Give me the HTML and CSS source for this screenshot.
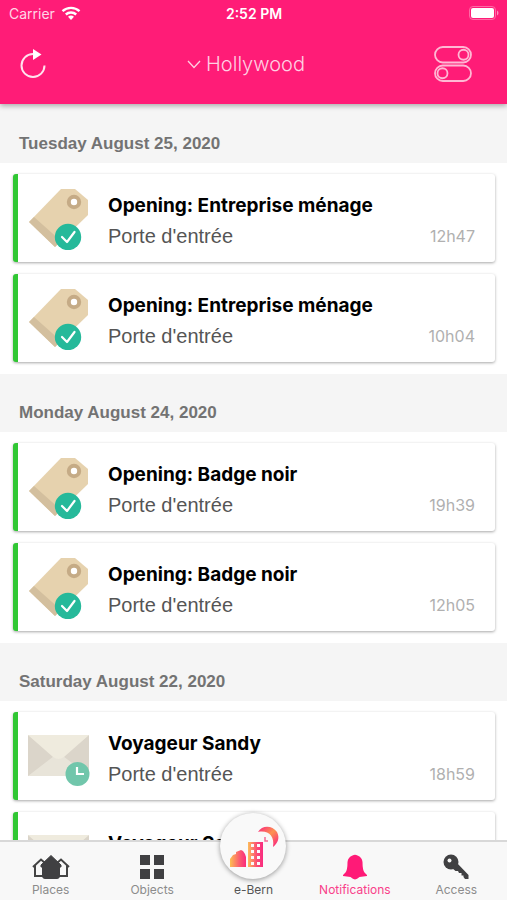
FILE: index.html
```html
<!DOCTYPE html>
<html lang="en">
<head>
<meta charset="utf-8">
<meta name="viewport" content="width=device-width, initial-scale=1">
<title>Notifications</title>
<link rel="stylesheet" href="styles.css">
</head>
<body>
<svg class="defs" aria-hidden="true">
  <defs>
    <linearGradient id="sunset" gradientUnits="userSpaceOnUse" x1="9" y1="0" x2="26" y2="0">
      <stop offset="0" stop-color="#fdc94e"/><stop offset=".6" stop-color="#fb5f70"/><stop offset="1" stop-color="#fb2b7c"/>
    </linearGradient>
    <linearGradient id="tower" gradientUnits="userSpaceOnUse" x1="28" y1="0" x2="43" y2="0">
      <stop offset="0" stop-color="#fdbd5a"/><stop offset=".6" stop-color="#fb4a75"/><stop offset="1" stop-color="#f92b80"/>
    </linearGradient>
    <linearGradient id="moon" gradientUnits="userSpaceOnUse" x1="38" y1="14" x2="56" y2="34">
      <stop offset="0" stop-color="#fb2280"/><stop offset=".5" stop-color="#fd9350"/><stop offset="1" stop-color="#fb2280"/>
    </linearGradient>
  </defs>
  <symbol id="tag" viewBox="0 0 62 64">
    <path fill="#e6d2ae" d="M33 3h14l13 11v15L27 61 1 36z"/>
    <path fill="#d3bf9e" d="M6 31 33 55 27 61 1 36z"/>
    <circle cx="46" cy="16" r="5.2" fill="#fff" stroke="#c5ab86" stroke-width="4"/>
    <circle cx="40" cy="51" r="13.200" fill="#26b99a"/>
    <path fill="none" stroke="#fff" stroke-width="2.200" stroke-linecap="round" stroke-linejoin="round" d="m34 51 5 5 7.500-10"/>
  </symbol>
  <symbol id="mail" viewBox="0 0 62 64">
    <path fill="#e8e4d9" d="M0 11h61v41H0z"/>
    <path fill="#dbd5ca" d="M0 11v41l26-20zM61 11v41L35 32z"/>
    <path fill="#efebde" d="M0 11h61L36 33q-5.500 4-11 0z"/>
    <circle cx="49.500" cy="50" r="12" fill="#71c6ab"/>
    <path fill="none" stroke="#fff" stroke-width="2.200" d="M49 43v7h7"/>
  </symbol>
</svg>
<div class="app">
  <header class="topbar">
    <div class="status">
      <span class="carrier">Carrier
        <svg width="20" height="14" viewBox="0 0 20 14" aria-hidden="true"><g fill="none" stroke="#fff" stroke-width="2.400"><path d="M1.500 5.200a12.500 12.500 0 0 1 17 0"/><path d="M4.800 8.500a7.800 7.800 0 0 1 10.400 0"/></g><path fill="#fff" d="M7 10.800a4.500 4.500 0 0 1 6 0l-3 3.200z"/></svg>
      </span>
      <span class="clock">2:52 PM</span>
      <svg class="battery" width="30" height="14" viewBox="0 0 30 14" aria-hidden="true"><rect x=".5" y=".5" width="26" height="13" rx="3.500" fill="none" stroke="#ff69a5"/><rect x="2" y="2" width="23" height="10" rx="2" fill="#fff"/><path fill="#ff8dbb" d="M28 4.500c2 1 2 4 0 5z"/></svg>
    </div>
    <div class="nav">
      <button class="icon-button" type="button" aria-label="Refresh">
        <svg width="26" height="30" viewBox="0 0 26 30"><path fill="none" stroke="#ffe3ee" stroke-width="2" d="M13 5A11.500 11.500 0 1 0 24.500 16.500"/><path fill="#fff" d="M13 0v11l8.500-5.500z"/></svg>
      </button>
      <button class="place" type="button">
        <svg width="14" height="9" viewBox="0 0 14 9" aria-hidden="true"><path fill="none" stroke="#ffd0e2" stroke-width="1.300" d="m1 1 6 6.500L13 1"/></svg>
        Hollywood
      </button>
      <button class="icon-button" type="button" aria-label="Filters">
        <svg width="38" height="36" viewBox="0 0 38 36"><g fill="none" stroke="#ffb8d4" stroke-width="1.800"><rect x="1" y="1" width="36" height="15.500" rx="7.750"/><circle cx="29.500" cy="8.750" r="5"/><rect x="1" y="19.500" width="36" height="15.500" rx="7.750"/><circle cx="8.500" cy="27.250" r="5"/></g></svg>
      </button>
    </div>
  </header>
  <main class="feed">
    <section>
      <h2>Tuesday August 25, 2020</h2>
      <div class="cards">
        <article class="card"><svg class="thumb" aria-hidden="true"><use href="#tag"/></svg><div class="info"><h3>Opening: Entreprise ménage</h3><div class="detail"><span>Porte d'entrée</span><time>12h47</time></div></div></article>
        <article class="card"><svg class="thumb" aria-hidden="true"><use href="#tag"/></svg><div class="info"><h3>Opening: Entreprise ménage</h3><div class="detail"><span>Porte d'entrée</span><time>10h04</time></div></div></article>
      </div>
    </section>
    <section>
      <h2>Monday August 24, 2020</h2>
      <div class="cards">
        <article class="card"><svg class="thumb" aria-hidden="true"><use href="#tag"/></svg><div class="info"><h3>Opening: Badge noir</h3><div class="detail"><span>Porte d'entrée</span><time>19h39</time></div></div></article>
        <article class="card"><svg class="thumb" aria-hidden="true"><use href="#tag"/></svg><div class="info"><h3>Opening: Badge noir</h3><div class="detail"><span>Porte d'entrée</span><time>12h05</time></div></div></article>
      </div>
    </section>
    <section>
      <h2>Saturday August 22, 2020</h2>
      <div class="cards">
        <article class="card"><svg class="thumb" aria-hidden="true"><use href="#mail"/></svg><div class="info"><h3>Voyageur Sandy</h3><div class="detail"><span>Porte d'entrée</span><time>18h59</time></div></div></article>
        <article class="card"><svg class="thumb" aria-hidden="true"><use href="#mail"/></svg><div class="info"><h3>Voyageur Sandy</h3></div></article>
      </div>
    </section>
  </main>
  <nav class="tabs">
    <a href="#places"><svg width="38" height="26" viewBox="0 0 38 26" aria-hidden="true"><g fill="none" stroke="#444" stroke-width="2"><path d="M1 13 9 5.500l4 3.500M3 11.500V22h9M37 13l-8-7.500-4 3.500M35 11.500V22h-9"/></g><path fill="#404042" stroke="#404042" stroke-width="1" stroke-linejoin="round" d="M19 1.500 9 11v2h1.500v9q0 2.500 2.500 2.500h12q2.500 0 2.500-2.500v-9H29v-2z"/></svg>Places</a>
    <a href="#objects"><svg width="26" height="26" viewBox="0 0 26 26" aria-hidden="true"><path fill="#404042" d="M1 1h10v10H1zM15 1h10v10H15zM1 15h10v10H1zM15 15h10v10H15z"/></svg>Objects</a>
    <a class="home" href="#home"><span class="bubble"><svg width="66" height="66" viewBox="0 0 66 66" aria-hidden="true"><path fill="url(#sunset)" d="M10 54V46l3-4 3-1v-2l5-2 2 1 2 3 1 3v10z"/><path fill="url(#tower)" fill-rule="evenodd" d="M28 29h15v25H28zM31 31v3h3v-3zM37 31v3h3v-3zM31 37v3h3v-3zM37 37v3h3v-3zM31 43v3h3v-3zM37 43v3h3v-3zM31 49v3h3v-3zM37 49v3h3v-3z"/><path fill="url(#moon)" d="M38 19C42 12 52 12 57 19 60 25 58 30 53 34 55 23 48 17 38 19z"/><path fill="none" stroke="#f56b95" stroke-width="1.500" d="M45 24v4h3"/></svg></span>e-Bern</a>
    <a class="active" href="#notifications" aria-current="page"><svg width="26" height="26" viewBox="0 0 26 26" aria-hidden="true"><path fill="#ff1a77" d="M10.500 1.500Q13 0 15.500 1.500 20 3 20.500 8q0 8 2 10.500L25 21v1l-7.500 1q-2.500 2-4.500 2.500Q11 25 8.500 23L1 22v-1l2.500-2.500q2-2.500 2-10.500Q6 3 10.500 1.500z"/></svg>Notifications</a>
    <a href="#access"><svg width="26" height="26" viewBox="0 0 26 26" aria-hidden="true"><circle cx="8" cy="8" r="7.500" fill="#404042"/><circle cx="6.500" cy="6.500" r="2" fill="#f8f8f8"/><path fill="#404042" d="m14 9 11.500 12v4h-3.500l-1.500-2v-1.500H18.500V19H16l-1-2-2.500 0L9 14z"/></svg>Access</a>
  </nav>
</div>
</body>
</html>
```

FILE: styles.css
```css
* { box-sizing: border-box; }

body {
  margin: 0;
  background: #fff;
  font-family: Inter, "Liberation Sans", sans-serif;
}

h2, h3 { margin: 0; }
svg { flex: none; }
.defs { position: absolute; width: 0; height: 0; }

.app {
  display: flex;
  flex-direction: column;
  height: 100vh;
}

.topbar {
  position: relative;
  z-index: 1;
  padding-bottom: 16px;
  background: #ff1c77;
  box-shadow: 0 2px 5px rgba(0, 0, 0, .3);
  color: #fff;
}

.status {
  display: grid;
  grid-template-columns: 1fr auto 1fr;
  align-items: center;
  height: 26px;
  padding: 0 8px 0 9px;
  font-size: 14px;
}

.carrier { display: flex; align-items: center; gap: 6px; color: #ffd6e6; }
.clock { font-weight: 600; }
.battery { justify-self: end; }

.nav {
  display: grid;
  grid-template-columns: 1fr auto 1fr;
  align-items: center;
  height: 62px;
  padding: 14px 35px 0 20px;
}

.nav button {
  display: flex;
  align-items: center;
  padding: 0;
  border: 0;
  background: none;
}

.nav .icon-button:last-child { justify-self: end; }

.nav .place {
  gap: 5px;
  color: #ffd0e2;
  font: 300 20px/24px Inter, "Liberation Sans", sans-serif;
}

.feed {
  flex: 1;
  min-height: 0;
  overflow: hidden;
  padding-top: 1px;
  background: #f5f5f5;
}

.feed h2 {
  height: 58px;
  padding: 28px 19px 0;
  color: #737373;
  font: bold 17px/22px "Liberation Sans", sans-serif;
}

.cards {
  display: flex;
  flex-direction: column;
  gap: 12px;
  padding: 11px 12px 12px 13px;
  background: #fff;
}

.card {
  display: flex;
  align-items: center;
  gap: 18px;
  height: 88px;
  padding: 0 20px 0 10px;
  border-left: 5px solid #30c733;
  border-radius: 3px;
  background: #fff;
  box-shadow: 0 1px 3px rgba(0, 0, 0, .35);
}

.thumb { width: 62px; height: 64px; }
.info { flex: 1; align-self: flex-start; padding-top: 17px; }

.info h3 {
  color: #000;
  font-size: 19px;
  font-weight: 700;
  line-height: 30px;
}

.detail {
  display: flex;
  align-items: center;
  justify-content: space-between;
  color: #555;
  font: 20px/30px "Liberation Sans", sans-serif;
}

.detail time { color: #b0b0b0; font: 16px/30px Inter, sans-serif; }

.tabs {
  position: relative;
  z-index: 1;
  display: grid;
  grid-template-columns: repeat(5, 1fr);
  height: 60px;
  border-top: 2px solid #d8d8d8;
  background: #f8f8f8;
}

.tabs a {
  display: flex;
  flex-direction: column;
  align-items: center;
  gap: 2px;
  padding-top: 12px;
  color: #8c8c8c;
  font-size: 12px;
  line-height: 16px;
  text-decoration: none;
}

.tabs .active { color: #f9408a; }
.tabs .home { position: relative; padding-top: 40px; color: #555; }

.bubble {
  position: absolute;
  top: -29px;
  width: 66px;
  height: 66px;
  border-radius: 50%;
  background: #f9f9f9;
  box-shadow: 0 1px 5px rgba(0, 0, 0, .4);
}
```
